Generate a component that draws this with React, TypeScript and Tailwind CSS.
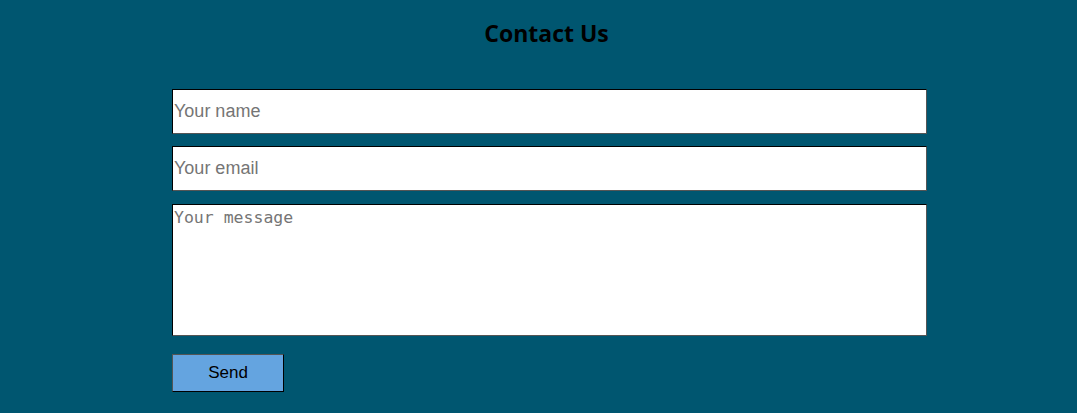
import React from "react";

export default function App() {
  return (
    <div className="w-[1077px] h-[413px] bg-[#005670] overflow-hidden">
      <div className="w-[755px] ml-[172px] pt-[18px]">
        <h1 className="text-center pr-[6px] text-[23px] font-bold text-black leading-[30px] font-['Open_Sans',sans-serif]">
          Contact Us
        </h1>

        <form className="mt-[41px] flex flex-col" onSubmit={(e) => e.preventDefault()}>
          <input
            type="text"
            placeholder="Your name"
            className="h-[45px] w-full bg-white border border-t-black border-l-black border-r-[#555] border-b-[#555] px-[1px] text-[18px] font-['Liberation_Sans',Arial,sans-serif] placeholder:text-[#757575] outline-none"
          />
          <input
            type="email"
            placeholder="Your email"
            className="mt-[12px] h-[45px] w-full bg-white border border-t-black border-l-black border-r-[#555] border-b-[#555] px-[1px] text-[18px] font-['Liberation_Sans',Arial,sans-serif] placeholder:text-[#757575] outline-none"
          />
          <textarea
            placeholder="Your message"
            className="mt-[13px] h-[132px] w-full resize-none bg-white border border-t-black border-l-black border-r-[#555] border-b-[#555] px-[1px] pt-[3px] text-[16.5px] leading-[20px] font-['DejaVu_Sans_Mono',monospace] placeholder:text-[#757575] outline-none"
          />
          <div className="mt-[18px]">
            <button
              type="submit"
              className="w-[112px] h-[38px] bg-[#64a4e0] border border-t-[#555] border-l-[#555] border-r-black border-b-black text-[17px] text-black font-['Liberation_Sans',Arial,sans-serif]"
            >
              Send
            </button>
          </div>
        </form>
      </div>
    </div>
  );
}
